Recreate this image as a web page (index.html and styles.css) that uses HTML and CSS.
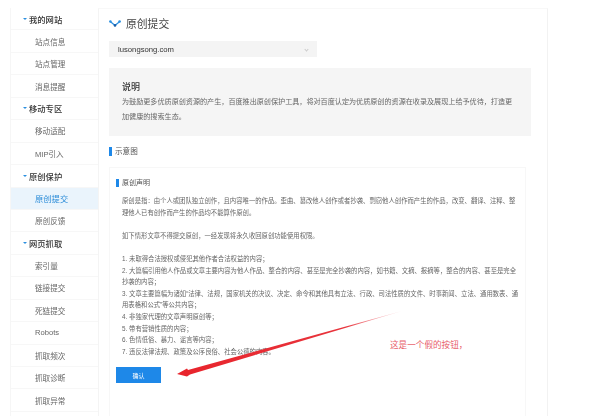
FILE: index.html
```html
<!DOCTYPE html>
<html lang="zh-CN">
<head>
<meta charset="utf-8">
<title>原创提交</title>
<link rel="stylesheet" href="styles.css">
</head>
<body>
<div class="page">
  <nav class="side">
    <div class="group">我的网站</div>
    <a class="item">站点信息</a>
    <a class="item">站点管理</a>
    <a class="item">消息提醒</a>
    <div class="group">移动专区</div>
    <a class="item">移动适配</a>
    <a class="item">MIP引入</a>
    <div class="group">原创保护</div>
    <a class="item active">原创提交</a>
    <a class="item">原创反馈</a>
    <div class="group">网页抓取</div>
    <a class="item">索引量</a>
    <a class="item">链接提交</a>
    <a class="item">死链提交</a>
    <a class="item">Robots</a>
    <a class="item">抓取频次</a>
    <a class="item">抓取诊断</a>
    <a class="item">抓取异常</a>
  </nav>
  <main class="main">
    <h1 class="title">
      <svg class="title-icon" viewBox="0 0 12 7" width="12" height="7"><path d="M1.2 1.5 L6 5.4 L10.8 1.5" fill="none" stroke="#2b8fe0" stroke-width="1.3"/><circle cx="1.4" cy="1.5" r="1.3" fill="#2b8fe0"/><circle cx="10.6" cy="1.5" r="1.3" fill="#2b8fe0"/><circle cx="6" cy="5.4" r="1.3" fill="#1a5ea8"/></svg>
      <span>原创提交</span>
    </h1>
    <div class="select"><span>lusongsong.com</span><i class="chev"></i></div>
    <section class="intro">
      <h2>说明</h2>
      <p>为鼓励更多优质原创资源的产生，百度推出原创保护工具，将对百度认定为优质原创的资源在收录及展现上给予优待，打造更加健康的搜索生态。</p>
    </section>
    <h3 class="bar-head">示意图</h3>
    <section class="card">
      <h3 class="bar-head small">原创声明</h3>
      <p class="legal">原创是指：由个人或团队独立创作，且内容唯一的作品。歪曲、篡改他人创作或者抄袭、剽窃他人创作而产生的作品，改变、翻译、注释、整理他人已有创作而产生的作品均不能算作原创。<br><br>如下情形文章不得提交原创，一经发现将永久收回原创功能使用权限。<br><br>1. 未取得合法授权或侵犯其他作者合法权益的内容；<br>2. 大篇幅引用他人作品或文章主要内容为他人作品、整合的内容、甚至是完全抄袭的内容，如书籍、文摘、报摘等，整合的内容、甚至是完全抄袭的内容；<br>3. 文章主要篇幅为诸如“法律、法规，国家机关的决议、决定、命令和其他具有立法、行政、司法性质的文件、时事新闻、立法、通用数表、通用表格和公式”等公共内容；<br>4. 非独家代理的文章声明原创等；<br>5. 带有营销性质的内容；<br>6. 色情低俗、暴力、谣言等内容；<br>7. 违反法律法规、政策及公序良俗、社会公德的内容。</p>
      <button class="btn">确认</button>
    </section>
  </main>
</div>
<svg class="arrow" viewBox="0 0 600 416" width="600" height="416">
  <defs>
    <linearGradient id="fade" gradientUnits="userSpaceOnUse" x1="178" y1="374" x2="402" y2="311">
      <stop offset="0" stop-color="#e8242c"/>
      <stop offset="0.75" stop-color="#e8343c"/>
      <stop offset="1" stop-color="#f4a0a8" stop-opacity="0.4"/>
    </linearGradient>
  </defs>
  <path d="M177 374 L187 368.4 L188 370 L402 311 L190 374.4 L187 376.4 Z" fill="url(#fade)"/>
</svg>
<div class="note">这是一个假的按钮，</div>
</body>
</html>
```
FILE: styles.css
```css
* { box-sizing: border-box; }
html, body { margin: 0; height: 416px; overflow: hidden; background: #fff; }
body {
  position: relative;
  font-family: "Liberation Sans", "Noto Sans CJK SC", sans-serif;
  color: #666;
}
.page {
  display: flex;
  height: 416px;
  padding: 8px 0 0 10px;
  overflow: hidden;
  filter: blur(0.45px);
}
.side {
  width: 88px;
  flex: none;
  border-left: 1px solid #f6f6f6;
}
.group, .item {
  display: flex;
  align-items: center;
  height: 22.45px;
  border-bottom: 1px solid #f7f7f7;
}
.group {
  padding-left: 18px;
  font-size: 8.3px;
  color: #333;
  font-weight: 500;
  position: relative;
}
.group::before {
  content: "";
  position: absolute;
  left: 12px;
  top: 9.5px;
  border-left: 2px solid transparent;
  border-right: 2px solid transparent;
  border-top: 2.5px solid #2b8fe0;
}
.item {
  padding-left: 24px;
  font-size: 7.6px;
  color: #666;
}
.item.active {
  background: #eaf4fc;
  color: #2b8cd8;
  font-size: 8.3px;
}
.main {
  width: 450px;
  flex: none;
  padding: 0 16px 0 10px;
  border-top: 1px solid #f8f8f8;
  border-left: 1px solid #f4f4f4;
  border-right: 1px solid #f2f2f2;
}
.title {
  display: flex;
  align-items: center;
  gap: 5px;
  margin: 0;
  height: 32px;
  padding-bottom: 4px;
  font-size: 10.8px;
  font-weight: 400;
  color: #444;
}
.select {
  display: flex;
  align-items: center;
  justify-content: space-between;
  width: 208px;
  height: 16px;
  padding: 0 9px;
  background: #f4f4f4;
  font-size: 7.7px;
  color: #333;
}
.chev {
  width: 3px;
  height: 3px;
  border-right: 1px solid #ccc;
  border-bottom: 1px solid #ccc;
  transform: rotate(45deg);
}
.intro {
  margin-top: 11px;
  height: 68px;
  padding: 13px 15px 0 13px;
  background: #f5f5f5;
}
.intro h2 {
  margin: 0;
  font-size: 9px;
  line-height: 12px;
  font-weight: 500;
  color: #333;
}
.intro p {
  margin: 2px 0 0;
  font-size: 7.1px;
  line-height: 15px;
  color: #666;
}
.bar-head {
  margin: 11px 0 0;
  padding-left: 3px;
  border-left: 3px solid #1e88e8;
  font-size: 7.6px;
  line-height: 9px;
  font-weight: 400;
  color: #555;
}
.card {
  width: 417px;
  margin-top: 11px;
  padding: 11px 6px 60px 6px;
  border: 1px solid #f7f7f7;
}
.bar-head.small { margin: 0; font-size: 7px; line-height: 8px; }
.legal {
  width: 399px;
  margin: 8px 0 0 6px;
  font-size: 6.35px;
  line-height: 11.6px;
  color: #666;
}
.btn {
  display: block;
  width: 45px;
  height: 16px;
  margin-top: 10px;
  padding: 0;
  border: 0;
  background: #1e88e8;
  color: #fff;
  font: 6px "Liberation Sans", "Noto Sans CJK SC", sans-serif;
}
.arrow {
  position: absolute;
  left: 0;
  top: 0;
  pointer-events: none;
}
.note {
  position: absolute;
  left: 390px;
  top: 339px;
  font-size: 8.6px;
  line-height: 12px;
  color: #e8606a;
}
```
